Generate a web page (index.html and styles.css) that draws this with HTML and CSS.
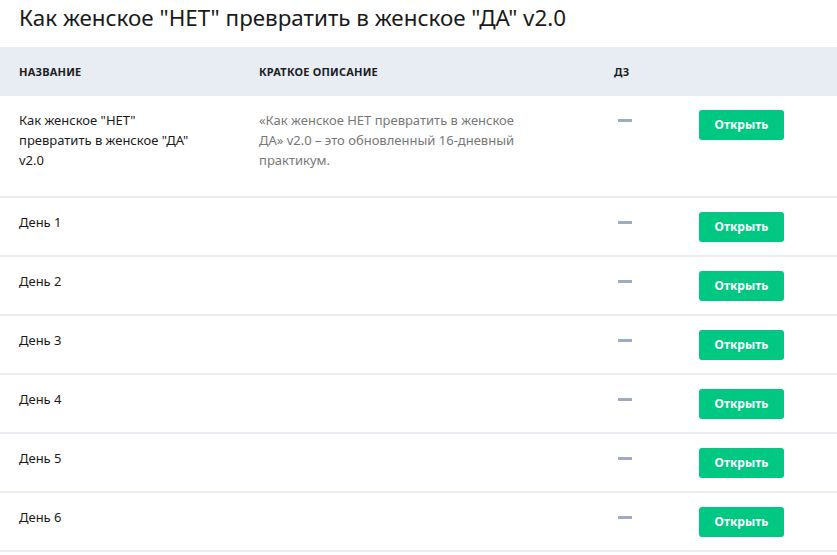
FILE: index.html
```html
<!DOCTYPE html>
<html lang="ru">
<head>
    <meta charset="UTF-8">
    <meta name="viewport" content="width=device-width, initial-scale=1.0">
    <title>Как женское "НЕТ" превратить в женское "ДА" v2.0</title>
    <link rel="stylesheet" href="styles.css">
</head>
<body>
    <h1 class="page-title">Как женское "НЕТ" превратить в женское "ДА" v2.0</h1>

    <table class="lessons">
        <thead>
            <tr>
                <th class="col-name">Название</th>
                <th class="col-desc">Краткое описание</th>
                <th class="col-hw">ДЗ</th>
                <th class="col-action"></th>
            </tr>
        </thead>
        <tbody>
            <tr>
                <td class="name">Как женское "НЕТ" превратить в женское "ДА" v2.0</td>
                <td class="desc">«Как женское НЕТ превратить в женское ДА» v2.0 – это обновленный 16-дневный практикум.</td>
                <td class="hw"><span class="dash"></span></td>
                <td class="action"><a class="btn" href="#">Открыть</a></td>
            </tr>
            <tr>
                <td class="name">День 1</td>
                <td class="desc"></td>
                <td class="hw"><span class="dash"></span></td>
                <td class="action"><a class="btn" href="#">Открыть</a></td>
            </tr>
            <tr>
                <td class="name">День 2</td>
                <td class="desc"></td>
                <td class="hw"><span class="dash"></span></td>
                <td class="action"><a class="btn" href="#">Открыть</a></td>
            </tr>
            <tr>
                <td class="name">День 3</td>
                <td class="desc"></td>
                <td class="hw"><span class="dash"></span></td>
                <td class="action"><a class="btn" href="#">Открыть</a></td>
            </tr>
            <tr>
                <td class="name">День 4</td>
                <td class="desc"></td>
                <td class="hw"><span class="dash"></span></td>
                <td class="action"><a class="btn" href="#">Открыть</a></td>
            </tr>
            <tr>
                <td class="name">День 5</td>
                <td class="desc"></td>
                <td class="hw"><span class="dash"></span></td>
                <td class="action"><a class="btn" href="#">Открыть</a></td>
            </tr>
            <tr>
                <td class="name">День 6</td>
                <td class="desc"></td>
                <td class="hw"><span class="dash"></span></td>
                <td class="action"><a class="btn" href="#">Открыть</a></td>
            </tr>
        </tbody>
    </table>
</body>
</html>
```

FILE: styles.css
```css
body {
    margin: 0;
    font-family: 'Noto Sans', 'Open Sans', sans-serif;
    color: #1a1a1a;
    background-color: #fff;
}
.page-title {
    margin: 0;
    padding: 4px 19px 0;
    height: 43px;
    font-size: 22.4px;
    font-weight: 400;
    line-height: 28px;
}
.lessons {
    width: 837px;
    border-collapse: collapse;
    table-layout: fixed;
}
.lessons th {
    background-color: #e8ecf3;
    height: 49px;
    padding: 0;
    text-align: left;
    font-size: 11px;
    font-weight: 700;
    text-transform: uppercase;
    letter-spacing: 0.2px;
    color: #1d1d1d;
}
.lessons th.col-name {
    width: 240px;
    padding-left: 19px;
}
.lessons th.col-desc {
    width: 355px;
}
.lessons th.col-hw {
    width: 85px;
}
.lessons td {
    vertical-align: top;
    padding: 14px 0;
    font-size: 13px;
    line-height: 20px;
    border-bottom: 2px solid #eaeef4;
}
.lessons td.name {
    padding-left: 19px;
    padding-right: 55px;
}
.lessons td.desc {
    color: #777;
    padding-right: 95px;
    padding-bottom: 26px;
}
.lessons td.hw {
    padding-left: 4px;
}
.lessons tbody tr:not(:first-child) td {
    padding-top: 14px;
    padding-bottom: 13px;
}
.dash {
    display: block;
    width: 14px;
    height: 3px;
    margin-top: 9px;
    background-color: #a0aac0;
}
.btn {
    display: block;
    width: 85px;
    height: 30px;
    line-height: 30px;
    text-align: center;
    background-color: #00c882;
    color: #fff;
    font-size: 12px;
    font-weight: 700;
    text-decoration: none;
    border-radius: 3px;
}
```
